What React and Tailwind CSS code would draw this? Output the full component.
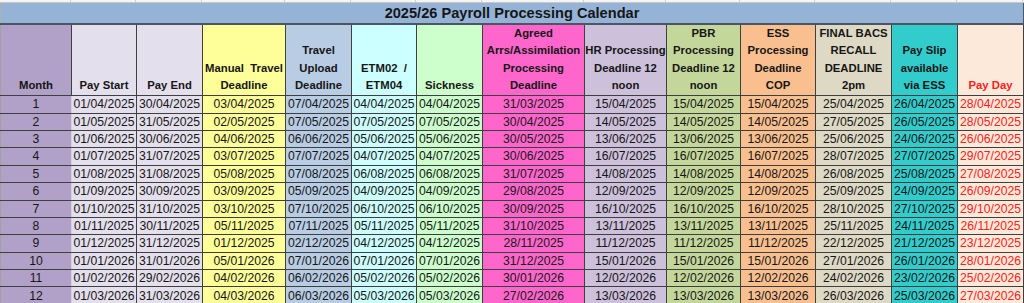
import React from "react";

const cols = [
  { w: 71, bg: "bg-[#b1a0c7]", head: ["Month"] },
  { w: 65, bg: "bg-[#e4dfec]", head: ["Pay Start"] },
  { w: 66, bg: "bg-[#e4dfec]", head: ["Pay End"] },
  { w: 83, bg: "bg-[#ffff99]", head: ["Manual\u00a0 Travel", "Deadline"] },
  { w: 66, bg: "bg-[#b8cce4]", head: ["Travel", "Upload", "Deadline"] },
  { w: 65, bg: "bg-[#ccffff]", head: ["ETM02  /", "ETM04"] },
  { w: 66, bg: "bg-[#ccffcc]", head: ["Sickness"] },
  { w: 102, bg: "bg-[#ff66cc]", head: ["Agreed", "Arrs/Assimilation", "Processing", "Deadline"] },
  { w: 82, bg: "bg-[#ccc0da]", head: ["HR Processing", "Deadline 12", "noon"] },
  { w: 74, bg: "bg-[#c4d79b]", head: ["PBR", "Processing", "Deadline 12", "noon"] },
  { w: 75, bg: "bg-[#fabf8f]", head: ["ESS", "Processing", "Deadline", "COP"] },
  { w: 76, bg: "bg-[#ddd9c4]", head: ["FINAL BACS", "RECALL", "DEADLINE", "2pm"] },
  { w: 66, bg: "bg-[#33cccc]", head: ["Pay Slip", "available", "via ESS"] },
  { w: 66, bg: "bg-[#fde9d9]", head: ["Pay Day"], red: true },
];

const rows = [
  ["01/04/2025", "30/04/2025", "03/04/2025", "07/04/2025", "04/04/2025", "04/04/2025", "31/03/2025", "15/04/2025", "15/04/2025", "15/04/2025", "25/04/2025", "26/04/2025", "28/04/2025"],
  ["01/05/2025", "31/05/2025", "02/05/2025", "07/05/2025", "07/05/2025", "07/05/2025", "30/04/2025", "14/05/2025", "14/05/2025", "14/05/2025", "27/05/2025", "26/05/2025", "28/05/2025"],
  ["01/06/2025", "30/06/2025", "04/06/2025", "06/06/2025", "05/06/2025", "05/06/2025", "30/05/2025", "13/06/2025", "13/06/2025", "13/06/2025", "25/06/2025", "24/06/2025", "26/06/2025"],
  ["01/07/2025", "31/07/2025", "03/07/2025", "07/07/2025", "04/07/2025", "04/07/2025", "30/06/2025", "16/07/2025", "16/07/2025", "16/07/2025", "28/07/2025", "27/07/2025", "29/07/2025"],
  ["01/08/2025", "31/08/2025", "05/08/2025", "07/08/2025", "06/08/2025", "06/08/2025", "31/07/2025", "14/08/2025", "14/08/2025", "14/08/2025", "26/08/2025", "25/08/2025", "27/08/2025"],
  ["01/09/2025", "30/09/2025", "03/09/2025", "05/09/2025", "04/09/2025", "04/09/2025", "29/08/2025", "12/09/2025", "12/09/2025", "12/09/2025", "25/09/2025", "24/09/2025", "26/09/2025"],
  ["01/10/2025", "31/10/2025", "03/10/2025", "07/10/2025", "06/10/2025", "06/10/2025", "30/09/2025", "16/10/2025", "16/10/2025", "16/10/2025", "28/10/2025", "27/10/2025", "29/10/2025"],
  ["01/11/2025", "30/11/2025", "05/11/2025", "07/11/2025", "05/11/2025", "05/11/2025", "31/10/2025", "13/11/2025", "13/11/2025", "13/11/2025", "25/11/2025", "24/11/2025", "26/11/2025"],
  ["01/12/2025", "31/12/2025", "01/12/2025", "02/12/2025", "04/12/2025", "04/12/2025", "28/11/2025", "11/12/2025", "11/12/2025", "11/12/2025", "22/12/2025", "21/12/2025", "23/12/2025"],
  ["01/01/2026", "31/01/2026", "05/01/2026", "07/01/2026", "07/01/2026", "07/01/2026", "31/12/2025", "15/01/2026", "15/01/2026", "15/01/2026", "27/01/2026", "26/01/2026", "28/01/2026"],
  ["01/02/2026", "29/02/2026", "04/02/2026", "06/02/2026", "05/02/2026", "05/02/2026", "30/01/2026", "12/02/2026", "12/02/2026", "12/02/2026", "24/02/2026", "23/02/2026", "25/02/2026"],
  ["01/03/2026", "31/03/2026", "04/03/2026", "06/03/2026", "05/03/2026", "05/03/2026", "27/02/2026", "13/03/2026", "13/03/2026", "13/03/2026", "26/03/2026", "25/03/2026", "27/03/2026"],
];

export default function App() {
  return (
    <div className="w-[1024px] h-[303px] overflow-hidden bg-white font-['Liberation_Sans',Arial,sans-serif] text-[#161616]">
      {/* grid remnant of the sheet row above */}
      <div className="flex h-[3px] border-b border-[#c8c8c8] bg-[#f4f4f4]">
        {cols.map((c, i) => (
          <div key={i} style={{ width: c.w }} className="border-r border-[#d0d0d0]" />
        ))}
      </div>
      <table className="border-collapse table-fixed w-[1024px]">
        <colgroup>
          {cols.map((c, i) => (
            <col key={i} style={{ width: c.w }} />
          ))}
          <col style={{ width: 1 }} />
        </colgroup>
        <tbody>
          <tr className="h-[21px]">
            <td colSpan={14} className="bg-[#95b3d7] border-b-2 border-r border-l border-[#4b5563] border-l-[#b0b0b0] text-center font-bold text-[14.6px] leading-none pt-[1px]">
              2025/26 Payroll Processing Calendar
            </td>
            <td className="bg-white" />
          </tr>
          <tr className="h-[68px]">
            {cols.map((c, i) => (
              <td
                key={i}
                className={
                  c.bg +
                  " border border-[#3f3f3f] align-bottom text-center font-bold text-[11.3px] leading-[17.3px] px-0 pb-[1px] whitespace-nowrap " +
                  (c.red ? "text-[#ff2020]" : "") +
                  (i === 0 ? " border-l-[#a0a0a0]" : "")
                }
              >
                {c.head.map((l, j) => (
                  <div key={j} className="whitespace-pre">{l}</div>
                ))}
              </td>
            ))}
            <td className="bg-white" />
          </tr>
          {rows.map((r, ri) => (
            <tr key={ri} className="h-[17.4px]">
              <td className="bg-[#b1a0c7] border border-[#3f3f3f] border-l-[#a0a0a0] border-r-[#d8d0e4] text-center text-[12.2px] leading-none">
                {ri + 1}
              </td>
              {r.map((v, vi) => {
                const c = cols[vi + 1];
                return (
                  <td
                    key={vi}
                    className={
                      c.bg +
                      " border border-[#3f3f3f] text-center text-[12.2px] leading-none px-0 whitespace-nowrap " +
                      (c.red ? "text-[#ff2020]" : "")
                    }
                  >
                    {v}
                  </td>
                );
              })}
              <td className="bg-white" />
            </tr>
          ))}
        </tbody>
      </table>
    </div>
  );
}
